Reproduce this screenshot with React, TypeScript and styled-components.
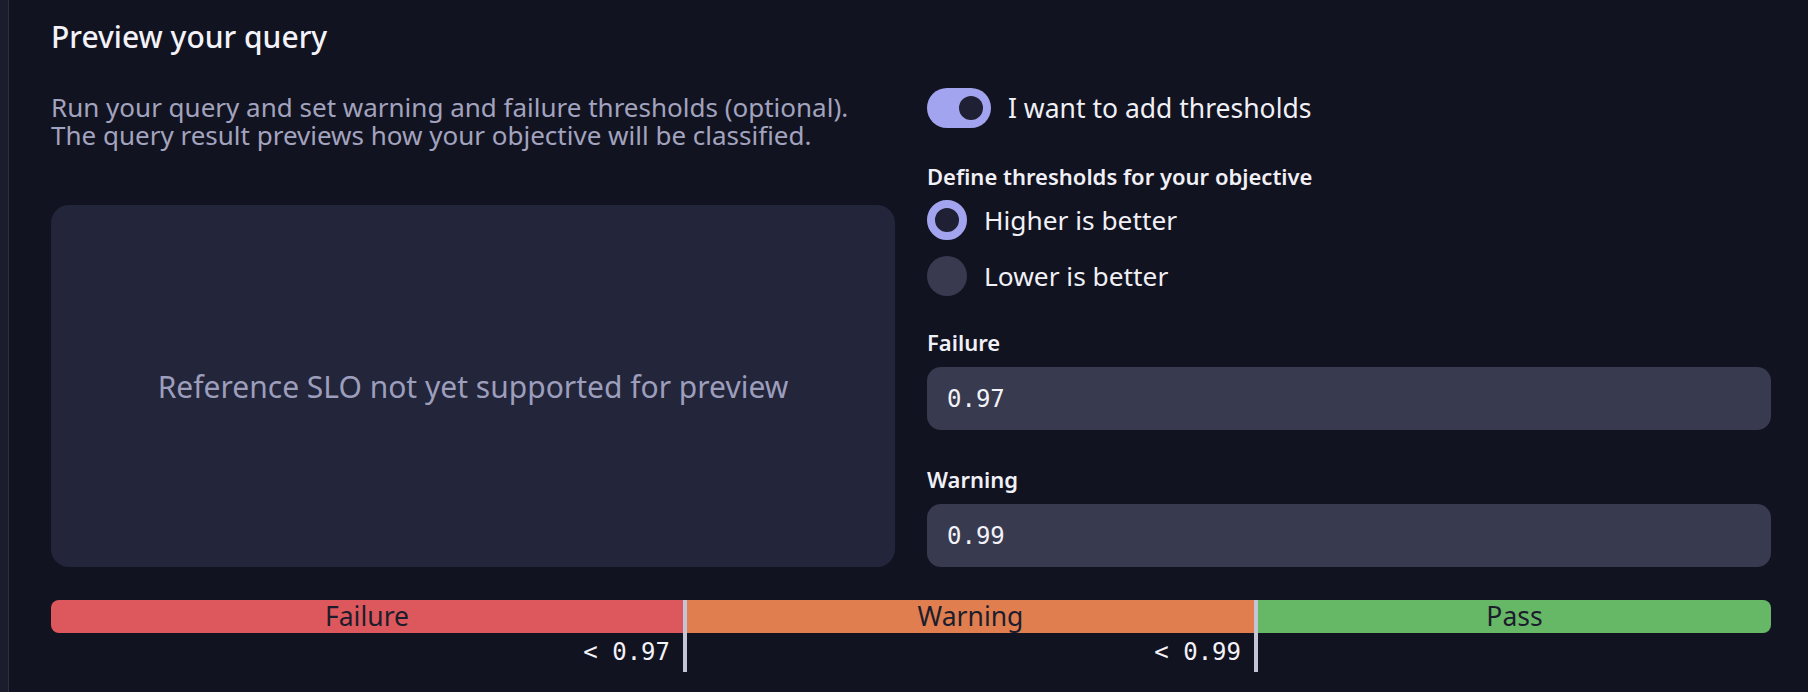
import React from "react";
import styled, { createGlobalStyle } from "styled-components";

const GlobalStyle = createGlobalStyle`
  html, body {
    margin: 0;
    padding: 0;
    background: #121320;
  }
  body {
    font-family: "Noto Sans", "Open Sans", sans-serif;
    color: #f0f0f6;
  }
  * { box-sizing: border-box; }
`;

const Page = styled.div`
  display: flex;
  min-height: 692px;
  background: #121320;
`;

const SideStrip = styled.div`
  width: 9px;
  flex: none;
  background: #1b1d2d;
  border-right: 1px solid #2c2e42;
`;

const Main = styled.main`
  flex: 1;
  padding: 17px 37px 0 42px;
`;

const Title = styled.h2`
  margin: 0;
  font-size: 30px;
  line-height: 40px;
  font-weight: 500;
  color: #f2f2f8;
`;

const Columns = styled.div`
  display: grid;
  grid-template-columns: 1fr 1fr;
  column-gap: 32px;
  margin-top: 31px;
`;

const LeftColumn = styled.div`
  display: flex;
  flex-direction: column;
`;

const Description = styled.p`
  margin: 5px 0 0;
  font-size: 26px;
  line-height: 28px;
  color: #a2a3bf;
`;

const PreviewBox = styled.div`
  flex: 1;
  margin-top: 56px;
  border-radius: 18px;
  background: #23253a;
  display: flex;
  align-items: center;
  justify-content: center;
  font-size: 30px;
  color: #9c9ebc;
`;

const RightColumn = styled.div`
  display: flex;
  flex-direction: column;
`;

const ToggleRow = styled.label`
  display: flex;
  align-items: center;
  gap: 17px;
  font-size: 26.5px;
  line-height: 40px;
  color: #f0f0f6;
`;

const Switch = styled.button<{ $on: boolean }>`
  width: 64px;
  height: 40px;
  border: none;
  border-radius: 20px;
  padding: 0 8px;
  background: ${(p) => (p.$on ? "#a2a4ef" : "#393a50")};
  display: flex;
  align-items: center;
  justify-content: ${(p) => (p.$on ? "flex-end" : "flex-start")};
  cursor: pointer;
`;

const Knob = styled.span`
  width: 24px;
  height: 24px;
  border-radius: 50%;
  background: #1f2034;
`;

const GroupTitle = styled.div`
  margin-top: 34px;
  font-size: 22px;
  line-height: 28px;
  font-weight: 600;
  color: #f0f0f6;
`;

const RadioList = styled.div`
  display: flex;
  flex-direction: column;
  gap: 16px;
  margin-top: 10px;
`;

const RadioRow = styled.label`
  display: flex;
  align-items: center;
  gap: 17px;
  font-size: 26.3px;
  line-height: 40px;
  color: #f0f0f6;
`;

const RadioInput = styled.input`
  appearance: none;
  margin: 0;
  width: 40px;
  height: 40px;
  border-radius: 50%;
  background: #393a50;
  cursor: pointer;
  &:checked {
    background: #1f2034;
    border: 8px solid #a2a4ef;
  }
`;

const Fields = styled.div`
  display: flex;
  flex-direction: column;
  gap: 35px;
  margin-top: 32px;
`;

const Field = styled.div`
  display: flex;
  flex-direction: column;
  gap: 11px;
`;

const FieldLabel = styled.label`
  font-size: 22px;
  line-height: 28px;
  font-weight: 600;
  color: #f0f0f6;
`;

const NumberInput = styled.input`
  height: 63px;
  border: none;
  border-radius: 14px;
  background: #383a4f;
  padding: 0 20px;
  font-family: "DejaVu Sans Mono", "Liberation Mono", monospace;
  font-size: 24px;
  color: #f2f2f8;
  outline: none;
`;

const Scale = styled.div`
  display: grid;
  grid-template-columns: 632fr 4px 567fr 4px 513fr;
  grid-template-rows: 33px 39px;
  margin-top: 33px;
`;

const Segment = styled.div<{ $color: string; $first?: boolean; $last?: boolean }>`
  grid-row: 1;
  background: ${(p) => p.$color};
  border-radius: ${(p) => (p.$first ? "8px 0 0 8px" : p.$last ? "0 8px 8px 0" : "0")};
  display: flex;
  align-items: center;
  justify-content: center;
  font-size: 26.5px;
  line-height: 33px;
  color: #1c1d2c;
`;

const Marker = styled.div`
  grid-row: 1 / span 2;
  background: #c3c4d6;
`;

const ThresholdValue = styled.div<{ $col: number }>`
  grid-row: 2;
  grid-column: ${(p) => p.$col};
  justify-self: end;
  padding-right: 13px;
  font-family: "DejaVu Sans Mono", "Liberation Mono", monospace;
  font-size: 24px;
  line-height: 39px;
  white-space: pre;
  color: #f2f2f8;
`;

export default function App() {
  const [on, setOn] = React.useState(true);
  const [dir, setDir] = React.useState("higher");
  return (
    <>
      <GlobalStyle />
      <Page>
        <SideStrip />
        <Main>
          <Title>Preview your query</Title>
          <Columns>
            <LeftColumn>
              <Description>
                Run your query and set warning and failure thresholds (optional).
                <br />
                The query result previews how your objective will be classified.
              </Description>
              <PreviewBox>Reference SLO not yet supported for preview</PreviewBox>
            </LeftColumn>
            <RightColumn>
              <ToggleRow>
                <Switch type="button" role="switch" aria-checked={on} $on={on} onClick={() => setOn(!on)}>
                  <Knob />
                </Switch>
                I want to add thresholds
              </ToggleRow>
              <GroupTitle>Define thresholds for your objective</GroupTitle>
              <RadioList>
                <RadioRow>
                  <RadioInput
                    type="radio"
                    name="dir"
                    checked={dir === "higher"}
                    onChange={() => setDir("higher")}
                  />
                  Higher is better
                </RadioRow>
                <RadioRow>
                  <RadioInput
                    type="radio"
                    name="dir"
                    checked={dir === "lower"}
                    onChange={() => setDir("lower")}
                  />
                  Lower is better
                </RadioRow>
              </RadioList>
              <Fields>
                <Field>
                  <FieldLabel>Failure</FieldLabel>
                  <NumberInput defaultValue="0.97" />
                </Field>
                <Field>
                  <FieldLabel>Warning</FieldLabel>
                  <NumberInput defaultValue="0.99" />
                </Field>
              </Fields>
            </RightColumn>
          </Columns>
          <Scale>
            <Segment $color="#dd585c" $first>Failure</Segment>
            <Marker />
            <Segment $color="#e07e50">Warning</Segment>
            <Marker />
            <Segment $color="#67b866" $last>Pass</Segment>
            <ThresholdValue $col={1}>{"< 0.97"}</ThresholdValue>
            <ThresholdValue $col={3}>{"< 0.99"}</ThresholdValue>
          </Scale>
        </Main>
      </Page>
    </>
  );
}
